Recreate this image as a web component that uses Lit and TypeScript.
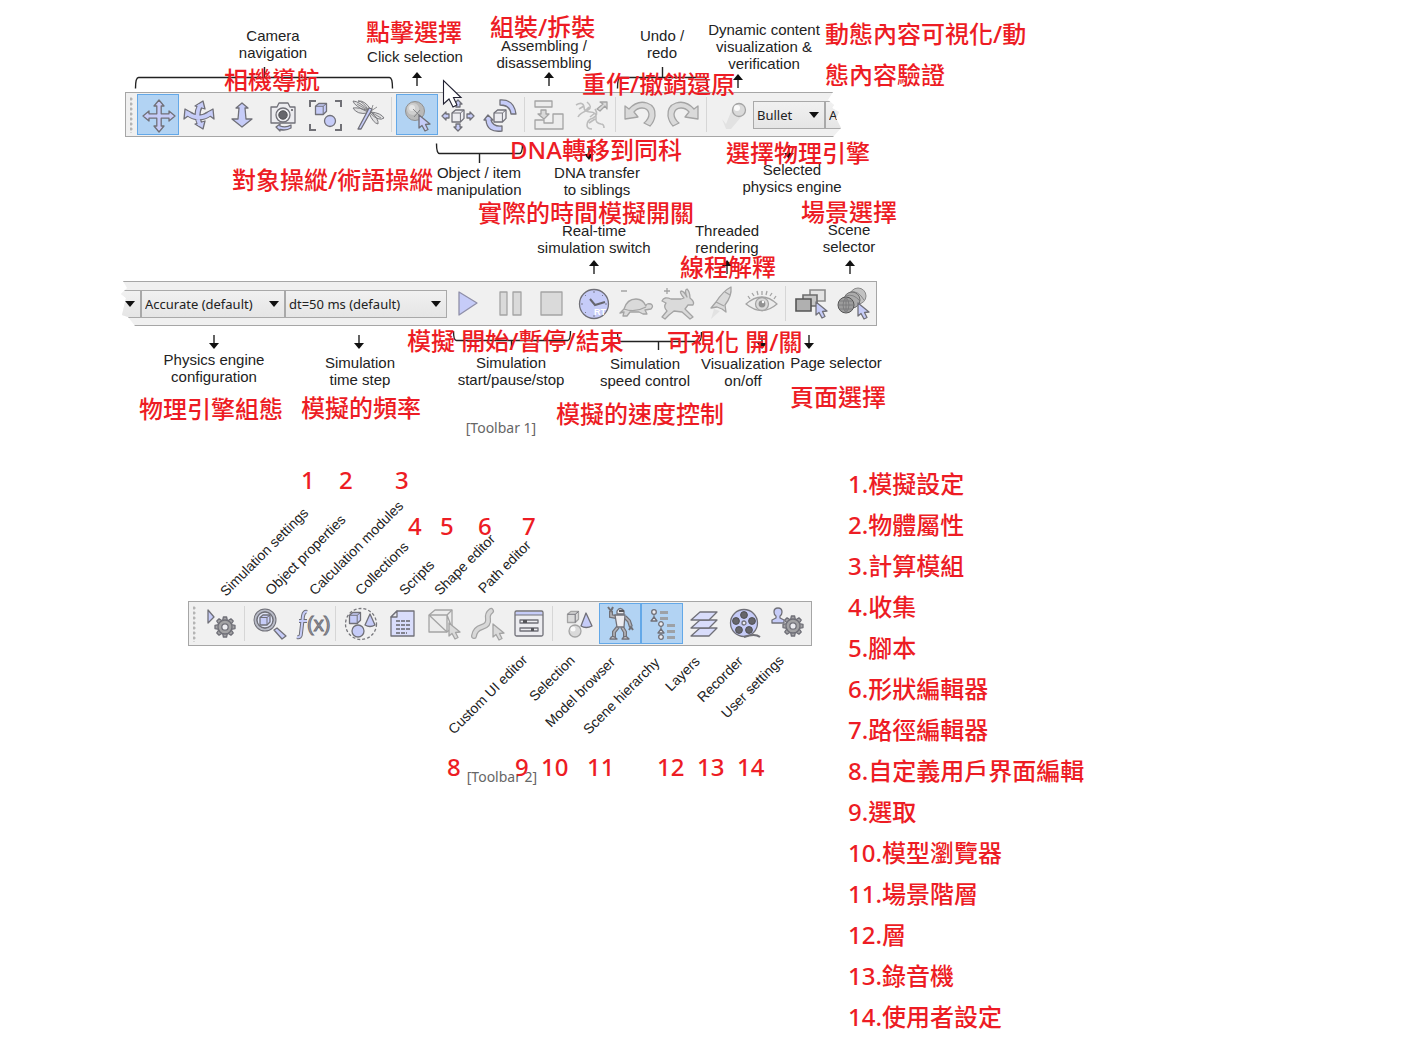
import { LitElement, html, svg, css, TemplateResult, SVGTemplateResult } from "lit";
import { customElement, property } from "lit/decorators.js";

type Icon = SVGTemplateResult;

/* Small shapes shared by several icons. All icons are drawn around (0, 0). */
const cube = (x: number, y: number, s: number, cls = "lav") => svg`
  <g transform="translate(${x} ${y})">
    <path class=${cls} d="M${-s} ${-s / 2}l${s * 0.6} ${-s * 0.5}h${s * 1.4}v${s * 1.4}l${-s * 0.6} ${s * 0.6}h${-s * 1.4}z"/>
    <path class="line" d="M${-s} ${-s / 2}h${s * 1.4}v${s * 1.5}M${s * 0.4} ${-s / 2}l${s * 0.6} ${-s * 0.5}"/>
  </g>`;

const pointer = (x: number, y: number, cls = "lav") => svg`
  <path class=${cls} transform="translate(${x} ${y})" d="M0 0V13L3 10.5L6 16L9 14.5L6.5 9.5L11 9Z"/>`;

const gear = (x: number, y: number) => svg`
  <g transform="translate(${x} ${y})">
    ${[0, 45, 90, 135, 180, 225, 270, 315].map(
      (a) => svg`<path class="metal" transform="rotate(${a})" d="M-2.4 -6L-1.6 -10H1.6L2.4 -6"/>`
    )}
    <circle class="metal" r="7"/><circle class="light" r="3.2"/>
  </g>`;

const tube = (d: string, tone = "") => svg`
  <path class="tube-out ${tone}" d=${d}/><path class="tube-in ${tone}" d=${d}/>`;

const ICONS: Record<string, Icon> = {
  pan: svg`<path class="lav" transform="translate(1 1)" d="M0-16L5-10H2.2V-2.2H10V-5L16 0L10 5V2.2H2.2V10H5L0 16L-5 10H-2.2V2.2H-10V5L-16 0L-10-5V-2.2H-2.2V-10H-5Z"/>`,
  orbit: svg`
    <g transform="translate(-1 0)">
      <path class="tube-out" d="M1-9Q-4 0 1 9M-10-1Q0 6 10-1"/>
      <path class="lav" d="M4-14L6-6L-4-9ZM4 14L6 6L-4 9ZM-14-6L-15 4L-7-2ZM14-6L15 4L7-2Z"/>
      <path class="tube-in" d="M1-10Q-4 0 1 10M-12-2Q0 7 12-2"/>
    </g>`,
  shift: svg`<path class="lav" d="M0-12L6-7H3L4 4H10L0 12L-10 4H-4L-3-7H-6Z"/>`,
  camera: svg`
    <path class="light" d="M-13-8H-7L-5-12H4L6-8H11V8H-13Z"/>
    <circle class="light" cx="-1" cy="0" r="7"/><circle class="dark" cx="-1" cy="0" r="4.2"/>
    <circle class="dot" cx="8" cy="-5" r="1"/>
    <path class="lav" d="M-8 12L-4 9V11Q2 13 7 10V13Q2 16-4 14.5V16Z"/>`,
  fit: svg`
    <path class="corner" d="M-16-8V-14H-10M9-14H15V-8M15 9V15H9M-10 15H-16V9"/>
    ${cube(-5, -6, 5.5)}<circle class="lav" cx="4" cy="6" r="5.5"/>`,
  dragonfly: svg`
    <path class="wing" d="M1-4Q-9-14-15-14Q-14-9 0-3ZM1-4Q-5-14-10-14Q-3-15 3-5ZM1-4Q-10-8-15-7Q-11 0 0-2ZM3-3Q13-2 16 3Q11 7 2-2ZM3-3Q11 4 10 9Q5 8 1-2Z"/>
    <path class="vein" d="M-11-11L1-4M3-3L13 3M3-4L5-10M3-4L9-8"/>
    <path class="lav" d="M-10 14L-7 14L2-2L4-6L1-7L-1-3Z"/>`,
  click: svg`
    <circle class="ball" cx="-2" cy="-4" r="9.5"/><circle class="shine-a" cx="-4" cy="-6" r="6"/><circle class="shine-b" cx="-5" cy="-7" r="3"/>
    <path class="vein" d="M-4-6L3 1M3-5L-3 2"/>${pointer(2, 0)}`,
  move: svg`
    ${cube(-1, 1, 6, "light")}
    <path class="lav" d="M-1-15L3-11H1V-8H-3V-11H-5ZM-1 16L3 12H1V9H-3V12H-5ZM-17 1L-13-3V-1H-10V3H-13V5ZM15 1L11-3V-1H8V3H11V5Z"/>`,
  turn: svg`
    ${cube(-1, 1, 6, "light")}
    <path class="lav" d="M-1-15Q13-16 15-1H10Q9-10-1-10ZM1 16Q-14 18-15 5H-17L-13 0L-8 5H-10Q-8 12 1 11Z"/>`,
  assemble: svg`
    <path class="off" d="M-15-14H2V-8H-15ZM-15 5H-6V8H3V-1H13V14H-15Z"/>
    <path class="off-fill" d="M-9-5H-4V-1H-1L-6 4L-12-1H-9Z"/>`,
  dna: svg`
    <path class="off-thick" d="M-16-10Q-9-14-8-8Q-8-3-2-3Q5-3 4 3Q3 8 9 9Q12 9 12 13M-5-13Q1-8-4-5Q-12-2-14 2M3-6Q7 0 1 3Q-5 5-5 10Q-5 14 0 14M-13-6L-8-9M-8-3L-3-8M-2 2L3-2M-3 8L3 4"/>
    <path class="off-fill" d="M5-6L11-11L8-13H15V-6L13-9L8-4Z"/>`,
  undo: svg`<path class="off-fill" d="M-16-9L-12-6Q-4-15 6-12Q15-9 14 1Q13 7 9 11L3 8Q8 4 8-1Q7-7 1-7Q-4-7-7-3L-3 2L-16 4Z"/>`,
  redo: svg`<path class="off-fill" d="M15-9L11-6Q3-15-7-12Q-16-9-15 1Q-14 7-10 11L-4 8Q-9 4-9-1Q-8-7-2-7Q3-7 6-3L2 2L15 4Z"/>`,
  verify: svg`
    <path class="trail" d="M-10 4L-6 14L-1 14L10 1L1-8L-6 9Z"/>
    <circle class="off-fill" cx="7" cy="-5" r="6.5"/><circle class="white" cx="5" cy="-7" r="3"/>`,
  play: svg`<path class="lav soft" d="M-9-12V11L9-1Z"/>`,
  pause: svg`<path class="off-fill" d="M-10-12H-3V11H-10ZM3-12H11V11H3Z"/>`,
  stop: svg`<path class="off-fill" d="M-11-12H10V11H-11Z"/>`,
  clock: svg`
    <circle class="lav" r="14.5"/>
    <path class="dark-line" d="M-4-5L1 1L11-2"/>
    <path class="ticks" d="M0-13V-11M0 13V11M-13 0H-11M13 0H11M-9-9L-8-8M9-9L8-8M-9 9L-8 8"/>
    <text class="rt" x="0" y="11">RT</text>`,
  turtle: svg`
    <path class="off-line" d="M-15-13H-9"/>
    <path class="off-fill" d="M-12 5Q-9-5 0-5Q7-5 10 2Q10-1 15 0Q18 2 15 5L9 6L11 10H7L3 8H-6L-9 12H-13L-12 8L-16 9Z"/>
    <path class="off-line" d="M-12 5Q-1 9 10 3"/>`,
  hare: svg`
    <path class="off-line" d="M-14-13H-8M-11-16V-10"/>
    <path class="off-fill" d="M-16-3Q-14-8-7-5L3-5L6-6Q1-12 3-13Q6-13 9-7Q6-14 9-15Q12-12 12-6Q17-2 15 1L10 1L7 5L12 10L15 13L12 15L4 8L-4 7L-9 11L-13 15L-16 13L-11 7Q-15 3-12-1Z"/>`,
  rocket: svg`
    <path class="off-fill" d="M11-17Q12-8 5 1L6 8L2 5L-3 3L-9 4L-4-2Q3-13 11-17Z"/>
    <path class="off-line" d="M5-12L10-9M-4-2L4 2"/>
    <path class="trail" d="M-6 5L0 7L-9 15Z"/>`,
  eye: svg`
    <path class="off" d="M-16 0Q0-14 15 0Q0 13-16 0Z"/>
    <circle class="off-fill" r="6.5"/><circle class="off-dark" r="3.4"/><circle class="white" cx="1" cy="-2" r="1.2"/>
    <path class="off-line" d="M-12-5L-14-8M-8-8L-10-11M-4-9L-5-13M0-9V-13M4-9L5-13M8-8L10-11M12-5L14-8"/>`,
  pages: svg`
    <path class="page-a" d="M-1-14H14V-3H-1Z"/><path class="page-b" d="M-8-9H6V2H-8Z"/>
    <path class="page-c" d="M-15-5H0V7H-15Z"/>${pointer(5, -2)}`,
  scenes: svg`
    <circle class="globe-a" cx="5" cy="-8" r="8"/><circle class="globe-b" cx="-1" cy="-4" r="8"/>
    <circle class="globe-c" cx="-7" cy="1" r="8"/>
    <path class="vein" d="M-15 1H1M-13-3H-1M-13 5H-1M-7-7V9M-7-7Q-13 1-7 9M-7-7Q-1 1-7 9M-7-8Q0-11 7-3M-3-12Q5-14 11-4"/>
    ${pointer(5, -1)}`,
  simset: svg`<path class="lav" d="M-13-14V-1L-7-7Z"/>${gear(4, 3)}`,
  object: svg`
    <path class="lav" d="M4 6L7 4L16 12L12 15Z"/>
    <circle class="ring-out" cx="-5" cy="-4" r="9.5"/><circle class="ring-in" cx="-5" cy="-4" r="9.5"/>
    <circle class="lens" cx="-5" cy="-4" r="8"/>${cube(-5, -4, 5, "lav")}`,
  calc: svg`
    <path class="fx-out" d="M-5-12Q-8-13-9-8L-11 9Q-11 14-15 13M-13-3H-5"/>
    <path class="fx-in" d="M-5-12Q-8-13-9-8L-11 9Q-11 14-15 13M-13-3H-5"/>
    <text class="fx" x="-5" y="7">(x)</text>`,
  collections: svg`
    <circle class="dashed" cx="0" cy="0" r="15.5"/>
    ${cube(-6, -6, 5.5)}<path class="lav" d="M9-10L14 1Q9 4 4 1Z"/><circle class="lav" cx="-3" cy="7" r="6"/>`,
  scripts: svg`
    <path class="paper" d="M-6-13H11V12H-12V-7Z"/><path class="light" d="M-12-7L-6-13V-7Z"/>
    <path class="dash-line" d="M-7-3H8M-7 1H8M-7 5H8M-7 9H4"/>`,
  shape: svg`
    <path class="off" d="M-16-9L-10-14H7V4L2 8H-16Z"/>
    <path class="off-line" d="M2-9L7-14M-16-9H2V8M-16-9L2 8M2-9L7 4"/>${pointer(4, -1, "off-fill")}`,
  path: svg`${tube("M-13 12Q-12 5-5 3Q2 1 1-5Q0-10 4-13", "grey")}${pointer(6, 0, "off-fill")}`,
  custom: svg`
    <rect class="light" x="-14" y="-13" width="28" height="25" rx="1.5"/>
    <path class="lav-plain" d="M-13-12H13V-9H-13Z"/><path class="line" d="M-14-9H14"/>
    <rect class="light" x="-9" y="-4" width="18" height="3"/><rect class="light" x="-9" y="4" width="18" height="3"/>
    <path class="dark-fill" d="M-6-4H-2V-1H-6ZM2 4H5V7H2Z"/>`,
  selection: svg`
    ${cube(-5, -7, 5.5, "off-fill")}<path class="lav" d="M8-11L14 2Q8 5 3 2Z"/><circle class="off-fill" cx="-3" cy="7" r="6"/>
    <circle class="white" cx="-5" cy="5" r="2.5"/>`,
  robot: svg`
    <path class="limb-out" d="M-4-7L-9-8V-13M5-7L9-3L11 3M-2 3L-6 8V13M2 3L5 8V13"/>
    <path class="limb-in" d="M-4-7L-9-8V-13M5-7L9-3L11 3M-2 3L-6 8V13M2 3L5 8V13"/>
    <path class="light" d="M-5-9H5L4 3H-3Z"/><path class="light" d="M-3-10V-13Q0-18 4-13V-10Z"/>
    <path class="dark-fill" d="M-1-14H4V-12H-1Z"/>
    <path class="light" d="M-10 15Q-8 10-3 15ZM2 15Q5 10 9 15Z"/>
    <path class="corner" d="M-12-17L-9-13L-7-17M9 6L11 3L13 6"/>`,
  hierarchy: svg`
    <path class="line" d="M-8-10V-6M-1 2V10"/>
    <circle class="light" cx="-8" cy="-12" r="2.3"/><path class="light" d="M-8-7L-5-3H-11Z"/>
    <circle class="light" cx="-1" cy="0" r="2.3"/><path class="light" d="M-1 5L2 9H-4Z"/><circle class="light" cx="-1" cy="13" r="2.3"/>
    <path class="bar" d="M-2-13H6V-10H-2ZM-2-7H6V-4H-2ZM5 0H13V3H5ZM5 6H13V9H5ZM5 12H13V15H5Z"/>`,
  layers: svg`
    <path class="paper" d="M-13 12L-4 4H13L5 12Z"/><path class="paper" d="M-13 4L-4-4H13L5 4Z"/><path class="paper" d="M-13-4L-4-12H13L5-4Z"/>`,
  recorder: svg`
    <circle class="lav" cx="-2" cy="-1" r="13.5"/>
    <circle class="dark" cx="-2" cy="-9" r="3.4"/><circle class="dark" cx="6" cy="-3" r="3.4"/><circle class="dark" cx="3" cy="6" r="3.4"/>
    <circle class="dark" cx="-7" cy="6" r="3.4"/><circle class="dark" cx="-10" cy="-3" r="3.4"/><circle class="light" cx="-2" cy="-1" r="2"/>
    <path class="corner" d="M-2 13Q9 9 14 13"/>`,
  user: svg`
    <path class="lav" d="M-10-16Q-6-16-6-12Q-6-9-8-8V-6L-4-4V-1H-16V-4L-12-6V-8Q-14-9-14-12Q-14-16-10-16Z"/>${gear(5, 2)}`,
};

type Item =
  | { kind: "grip" }
  | { kind: "sep" }
  | { kind: "tool"; icon: string; label: string; on?: boolean }
  | { kind: "combo"; value: string; label: string; size: string };

const grip: Item = { kind: "grip" };
const sep: Item = { kind: "sep" };
const tool = (icon: string, label: string, on = false): Item => ({ kind: "tool", icon, label, on });
const combo = (value: string, label: string, size: string): Item => ({ kind: "combo", value, label, size });

@customElement("tool-strip")
export class ToolStrip extends LitElement {
  @property({ attribute: false }) items: Item[] = [];
  @property() edge = "";

  static styles = css`
    :host { display: block; width: fit-content; }
    .strip {
      display: flex; align-items: center; box-sizing: border-box; height: 45px;
      border: 1px solid #a6a6a6; background: #f0f0f0; padding-right: 2px;
    }
    .torn-right {
      padding-right: 0; border-right: 0;
      clip-path: polygon(0 0, 708px 0, 703px 8px, 709px 13px, 707px 16px, 714px 20px, 711px 26px, 716px 36px, 708px 100%, 0 100%);
    }
    .torn-left {
      border-left: 0;
      clip-path: polygon(2px 0, 100% 0, 100% 100%, 14px 100%, 7px 36px, 1px 34px, 5px 17px, 0 13px, 6px 7px);
    }
    .grip {
      width: 3px; height: 36px; margin: 0 4px;
      background: radial-gradient(circle at 1px 2px, #b4b4b4 1px, transparent 2px) 0 0 / 3px 5px;
    }
    .sep { width: 1px; height: 35px; margin: 0 4px 0 2px; background: #d6d6d6; }
    .tool {
      display: block; box-sizing: border-box; width: 42px; height: 41px; margin: 0; padding: 0;
      border: 1px solid transparent; background: none;
    }
    .tool.on { background: #b2d3f3; border-color: #63a8e8; }
    .tool svg { display: block; width: 40px; height: 39px; overflow: visible; }
    .combo { display: grid; flex: none; align-items: center; height: 28px; }
    .combo > * { grid-area: 1 / 1; }
    .small { width: 72px; }
    .medium { width: 144px; }
    .large { width: 162px; }
    .cut-start { width: 72px; margin-left: -52px; }
    .cut-end { width: 144px; margin-right: -128px; }
    select {
      appearance: none; box-sizing: border-box; width: 100%; height: 28px; margin: 0; padding: 0 20px 0 3px;
      border: 1px solid #a9a9a9; border-radius: 0; background: linear-gradient(#f1f1f1, #e5e5e5);
      color: #222; font: 13px/20px "Noto Sans", "Open Sans", sans-serif;
    }
    .caret { justify-self: end; width: 10px; height: 6px; margin-right: 6px; fill: #111; pointer-events: none; }

    .lav, .light, .metal, .paper, .line, .lens { stroke: #707078; stroke-width: 1.3; stroke-linejoin: round; }
    .lav { fill: #c6ccf8; }
    .soft { stroke: #8f8fa8; }
    .lav-plain { fill: #c6ccf8; }
    .light { fill: #ececf0; }
    .metal { fill: #a2a2a4; }
    .paper { fill: #d9ddfb; }
    .lens { fill: #dfe4f6; }
    .ball { fill: #b9b9b9; stroke: #909090; }
    .shine-a { fill: #cfcfcf; }
    .shine-b { fill: #e6e6e6; }
    .line { fill: none; stroke-width: 1; }
    .wing { fill: #dededf; stroke: #7c7c80; stroke-width: 1; }
    .vein { fill: none; stroke: #77777a; stroke-width: 0.8; }
    .dark { fill: #66666c; stroke: #505054; }
    .dark-fill, .dot { fill: #55555a; }
    .dark-line { fill: none; stroke: #66666f; stroke-width: 2; }
    .ticks { fill: none; stroke: #7c7c90; }
    .corner { fill: none; stroke: #707076; stroke-width: 2; }
    .limb-out { fill: none; stroke: #707076; stroke-width: 4; }
    .limb-in { fill: none; stroke: #b4b4ba; stroke-width: 1.6; }
    .bar { fill: #9da1a6; }
    .white { fill: #fafafa; }
    .dashed { fill: none; stroke: #77777c; stroke-width: 1.3; stroke-dasharray: 3 2; }
    .dash-line { fill: none; stroke: #66666c; stroke-width: 1.4; stroke-dasharray: 4 1; }
    .tube-out { fill: none; stroke: #707078; stroke-width: 6; }
    .tube-in { fill: none; stroke: #c6ccf8; stroke-width: 3.6; }
    .tube-out.grey { stroke: #a4a4a4; stroke-linecap: round; }
    .tube-in.grey { stroke: #d8d8d8; stroke-linecap: round; }
    .ring-out { fill: none; stroke: #707078; stroke-width: 4; }
    .ring-in { fill: none; stroke: #b9bcc8; stroke-width: 2; }
    .fx-out { fill: none; stroke: #707078; stroke-width: 4; }
    .fx-in { fill: none; stroke: #c6ccf8; stroke-width: 2; }
    .fx { font: 20px "Liberation Sans", sans-serif; fill: #a8a8ac; stroke: #707078; stroke-width: 1; }
    .rt { font: bold 9px "Liberation Sans", sans-serif; fill: #fff; }
    .off, .off-fill, .off-line, .off-thick { stroke: #a4a4a4; stroke-width: 1.3; stroke-linejoin: round; }
    .off { fill: #ececec; }
    .off-fill { fill: #dadada; }
    .off-line { fill: none; }
    .off-thick { fill: none; stroke: #bcbcbc; stroke-width: 1.6; }
    .off-dark { fill: #929292; }
    .trail { fill: #e2e2e2; }
    .page-a { fill: #e4e4e4; stroke: #8a8a8a; stroke-width: 1.6; }
    .page-b { fill: #c6c6c6; stroke: #6c6c6c; stroke-width: 1.6; }
    .page-c { fill: #b0b0b0; stroke: #555; stroke-width: 1.6; }
    .globe-a { fill: #c2c2c2; stroke: #8a8a8a; }
    .globe-b { fill: #ababab; stroke: #707070; }
    .globe-c { fill: #9c9c9c; stroke: #555; }
  `;

  private item(i: Item): TemplateResult {
    switch (i.kind) {
      case "grip":
        return html`<span class="grip"></span>`;
      case "sep":
        return html`<span class="sep"></span>`;
      case "tool":
        return html`<button class="tool ${i.on ? "on" : ""}" type="button" aria-label=${i.label} aria-pressed=${i.on ? "true" : "false"}>
          <svg viewBox="-20 -20 40 39" aria-hidden="true">${ICONS[i.icon]}</svg>
        </button>`;
      case "combo":
        return html`<label class="combo ${i.size}">
          <select aria-label=${i.label}><option>${i.value}</option></select>
          <svg class="caret" viewBox="0 0 10 6" aria-hidden="true"><path d="M0 0H10L5 6Z"/></svg>
        </label>`;
    }
  }

  render() {
    return html`<div class="strip ${this.edge}" role="toolbar">${this.items.map((i) => this.item(i))}</div>`;
  }
}

const MAIN_ROW: Item[] = [
  grip,
  tool("pan", "Camera pan", true), tool("orbit", "Camera rotate"), tool("shift", "Camera shift"),
  tool("camera", "Camera angle"), tool("fit", "Fit to view"), tool("dragonfly", "Fly"),
  sep,
  tool("click", "Click selection", true), tool("move", "Object shift"), tool("turn", "Object rotate"),
  sep,
  tool("assemble", "Assemble"), tool("dna", "DNA transfer"),
  sep,
  tool("undo", "Undo"), tool("redo", "Redo"),
  sep,
  tool("verify", "Dynamic content"),
  combo("Bullet", "Physics engine", "small"),
  combo("Accurate (default)", "Engine configuration", "cut-end"),
];

const SIM_ROW: Item[] = [
  combo("Bullet", "Physics engine", "cut-start"),
  combo("Accurate (default)", "Engine configuration", "medium"),
  combo("dt=50 ms (default)", "Time step", "large"),
  tool("play", "Start"), tool("pause", "Pause"), tool("stop", "Stop"), tool("clock", "Real-time"),
  tool("turtle", "Slower"), tool("hare", "Faster"), tool("rocket", "Threaded rendering"), tool("eye", "Visualization"),
  sep,
  tool("pages", "Page selector"), tool("scenes", "Scene selector"),
];

const SIDE_ROW: Item[] = [
  grip,
  tool("simset", "Simulation settings"),
  sep,
  tool("object", "Object properties"), tool("calc", "Calculation modules"),
  sep,
  tool("collections", "Collections"), tool("scripts", "Scripts"), tool("shape", "Shape editor"),
  tool("path", "Path editor"), tool("custom", "Custom UI editor"),
  sep,
  tool("selection", "Selection"), tool("robot", "Model browser", true), tool("hierarchy", "Scene hierarchy", true),
  tool("layers", "Layers"), tool("recorder", "Recorder"), tool("user", "User settings"),
];

/* Callout captions: centre x, top y, lines. */
const CALLOUTS: [number, number, string[]][] = [
  [273, 27, ["Camera", "navigation"]],
  [415, 48, ["Click selection"]],
  [544, 37, ["Assembling /", "disassembling"]],
  [662, 27, ["Undo /", "redo"]],
  [764, 21, ["Dynamic content", "visualization &", "verification"]],
  [479, 164, ["Object / item", "manipulation"]],
  [597, 164, ["DNA transfer", "to siblings"]],
  [792, 161, ["Selected", "physics engine"]],
  [594, 222, ["Real-time", "simulation switch"]],
  [727, 222, ["Threaded", "rendering"]],
  [849, 221, ["Scene", "selector"]],
  [214, 351, ["Physics engine", "configuration"]],
  [360, 354, ["Simulation", "time step"]],
  [511, 354, ["Simulation", "start/pause/stop"]],
  [645, 355, ["Simulation", "speed control"]],
  [743, 355, ["Visualization", "on/off"]],
  [836, 354, ["Page selector"]],
];

/* Translated notes: left x, centre y, text. */
const NOTES: [number, number, string[]][] = [
  [366, 32, ["點擊選擇"]],
  [490, 27, ["組裝/拆裝"]],
  [224, 80, ["相機導航"]],
  [582, 84, ["重作/撤銷還原"]],
  [825, 34, ["動態內容可視化/動", "態內容驗證"]],
  [510, 150, ["DNA轉移到同科"]],
  [726, 153, ["選擇物理引擎"]],
  [232, 180, ["對象操縱/術語操縱"]],
  [478, 213, ["實際的時間模擬開關"]],
  [801, 212, ["場景選擇"]],
  [680, 267, ["線程解釋"]],
  [407, 341, ["模擬 開始/暫停/結束"]],
  [667, 342, ["可視化 開/關"]],
  [139, 409, ["物理引擎組態"]],
  [301, 408, ["模擬的頻率"]],
  [790, 397, ["頁面選擇"]],
  [556, 414, ["模擬的速度控制"]],
];

/* Slanted captions of the second figure: baseline start x, y, text. */
const SLANTED: [number, number, string][] = [
  [226, 134, "Simulation settings"],
  [271, 133, "Object properties"],
  [315, 133, "Calculation modules"],
  [361, 133, "Collections"],
  [405, 133, "Scripts"],
  [440, 133, "Shape editor"],
  [484, 131, "Path editor"],
  [454, 272, "Custom UI editor"],
  [535, 239, "Selection"],
  [551, 265, "Model browser"],
  [589, 272, "Scene hierarchy"],
  [671, 229, "Layers"],
  [703, 240, "Recorder"],
  [727, 256, "User settings"],
];

const NUMBERS: [number, number, string[]][] = [
  [301, 17, ["1"]], [339, 17, ["2"]], [395, 17, ["3"]],
  [408, 63, ["4"]], [440, 63, ["5"]], [478, 63, ["6"]], [522, 63, ["7"]],
  [447, 304, ["8"]], [515, 304, ["9"]], [541, 304, ["10"]], [587, 304, ["11"]],
  [657, 304, ["12"]], [697, 304, ["13"]], [737, 304, ["14"]],
];

const LEGEND = [
  "模擬設定", "物體屬性", "計算模組", "收集", "腳本", "形狀編輯器", "路徑編輯器",
  "自定義用戶界面編輯", "選取", "模型瀏覽器", "場景階層", "層", "錄音機", "使用者設定",
];

const UP: [number, number][] = [[417, 72], [549, 72], [738, 74], [594, 260], [727, 260], [850, 260]];
const DOWN: [number, number][] = [[589, 160], [789, 159], [214, 349], [359, 349], [762, 349], [809, 349]];

@customElement("app-root")
export class AppRoot extends LitElement {
  static styles = css`
    :host { display: block; background: #fff; }
    .page { display: grid; grid-template-columns: auto 1fr; align-items: start; min-height: 100vh; align-content: start; }
    figure { position: relative; margin: 0; width: fit-content; }
    .first { grid-column: 1 / -1; padding: 92px 0 25px 121px; }
    .second { padding: 138px 36px 0 188px; }
    .first .main { margin-left: 4px; }
    .first .sim { margin-top: 144px; }
    figcaption { padding-left: 4px; text-align: center; font: 14px/20px "Noto Sans", "Open Sans", sans-serif; color: #666; }
    .first figcaption { margin-top: 92px; }
    .second figcaption { margin-top: 121px; }
    .marks { position: absolute; left: 0; top: 0; width: 900px; height: 440px; pointer-events: none; }
    .marks .stroke { fill: none; stroke: #222; stroke-width: 1.4; }
    .marks .head { fill: #111; }
    .marks .cursor { fill: #fff; stroke: #223; stroke-width: 1.1; }
    .callout {
      position: absolute; transform: translateX(-50%); text-align: center; white-space: nowrap;
      font: 15px/17px "Liberation Sans", Arial, sans-serif; color: #222;
    }
    .slanted {
      position: absolute; margin-top: -12px; transform: rotate(-45deg); transform-origin: 0 12px; white-space: nowrap;
      font: 14px/14px "Liberation Sans", Arial, sans-serif; color: #222;
    }
    .note, .legend {
      font: 500 24px/41px "Noto Sans", "Noto Sans CJK TC", sans-serif; color: #ed1c24;
    }
    .note { position: absolute; margin-top: -21px; white-space: nowrap; }
    .callout span, .note span { display: block; }
    .legend { list-style: none; margin: 0; padding: 0; }
  `;

  private notes(list: [number, number, string[]][]) {
    return list.map(
      ([x, y, lines]) => html`<div class="note" lang="zh-Hant" style="left:${x}px;top:${y}px">${lines.map((l) => html`<span>${l}</span>`)}</div>`
    );
  }

  private marks() {
    return html`<svg class="marks" viewBox="0 0 900 440" aria-hidden="true">
      <path class="stroke" d="M135.500 88.500Q135.500 77.500 138.500 77.500H389.500Q392.500 77.500 392.500 88.500M264.500 67V77
        M617.500 88.500Q617.500 77.500 620.500 77.500H704.500Q707.500 77.500 707.500 88.500M662.500 67V77
        M436.500 143.500Q436.500 153.500 439.500 153.500H519.500Q522.500 153.500 522.500 143.500M479.500 153V163
        M453.500 331Q453.500 340.500 456.500 340.500H567.500Q570.500 340.500 570.500 331M511.500 340V350
        M617.500 332Q617.500 341.500 620.500 341.500H698.500Q701.500 341.500 701.500 332M658.500 341V350"/>
      ${UP.map(([x, y]) => svg`<path class="stroke" d="M${x} ${y + 4}V${y + 14}"/><path class="head" d="M${x} ${y}L${x + 5} ${y + 6}H${x - 5}Z"/>`)}
      ${DOWN.map(([x, y]) => svg`<path class="stroke" d="M${x} ${y - 14}V${y - 4}"/><path class="head" d="M${x} ${y}L${x + 5} ${y - 6}H${x - 5}Z"/>`)}
      <path class="cursor" d="M443.500 80.500V104L449 99L453 107L457 105L453.500 97.500H461Z"/>
    </svg>`;
  }

  render() {
    return html`<main class="page">
      <figure class="first">
        <tool-strip class="main" .items=${MAIN_ROW} edge="torn-right"></tool-strip>
        <tool-strip class="sim" .items=${SIM_ROW} edge="torn-left"></tool-strip>
        <figcaption>[Toolbar 1]</figcaption>
        ${this.marks()}
        ${CALLOUTS.map(([x, y, lines]) => html`<div class="callout" style="left:${x}px;top:${y}px">${lines.map((l) => html`<span>${l}</span>`)}</div>`)}
        ${this.notes(NOTES)}
      </figure>
      <figure class="second">
        <tool-strip .items=${SIDE_ROW}></tool-strip>
        <figcaption>[Toolbar 2]</figcaption>
        ${SLANTED.map(([x, y, t]) => html`<div class="slanted" style="left:${x}px;top:${y}px">${t}</div>`)}
        ${this.notes(NUMBERS)}
      </figure>
      <ol class="legend" lang="zh-Hant">${LEGEND.map((t, n) => html`<li>${n + 1}.${t}</li>`)}</ol>
    </main>`;
  }
}
